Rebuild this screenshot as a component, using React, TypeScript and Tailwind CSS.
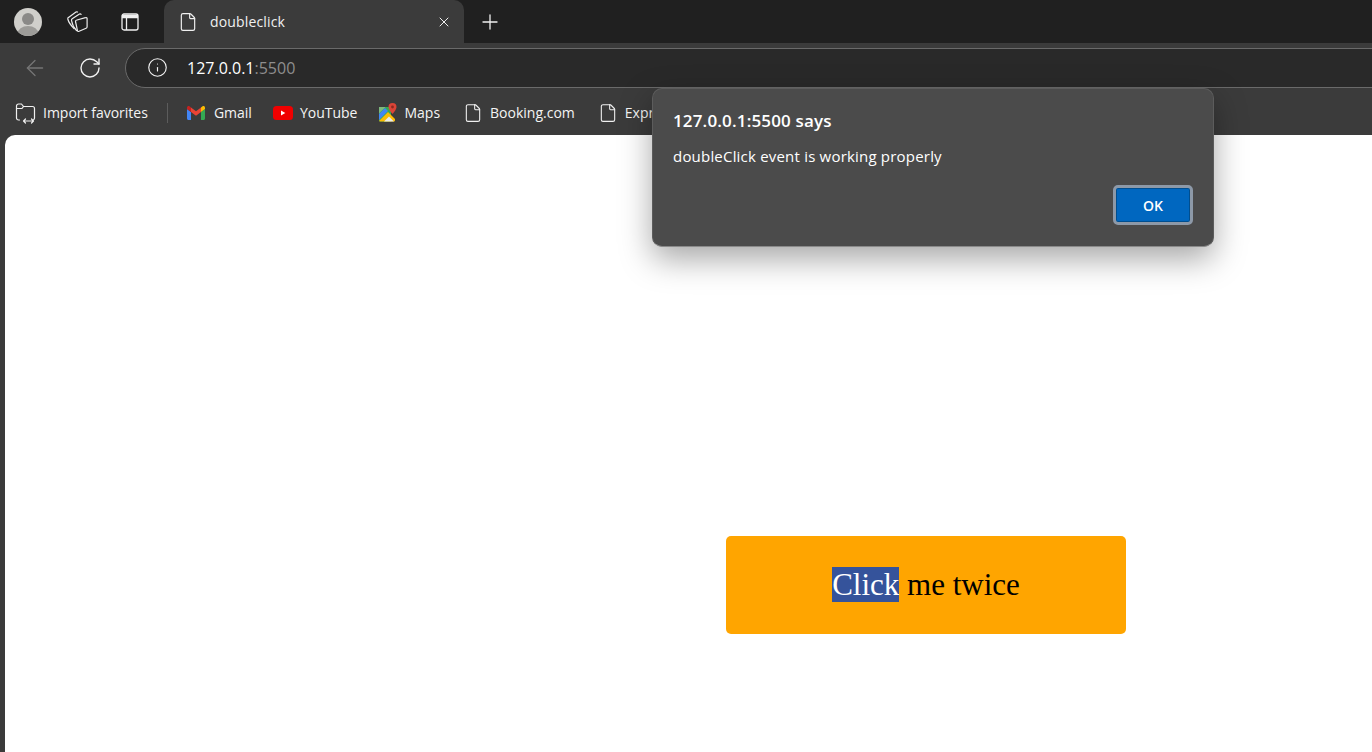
import React from 'react';
import { ArrowLeft, RotateCw, Info, X, Plus, File } from 'lucide-react';

const uiFont = "font-['Open_Sans','Noto_Sans',sans-serif]";

const ProfileIcon = () => (
  <svg width="28" height="28" viewBox="0 0 28 28">
    <defs>
      <clipPath id="avatar">
        <circle cx="14" cy="14" r="14" />
      </clipPath>
    </defs>
    <g clipPath="url(#avatar)">
      <rect width="28" height="28" fill="#d0cfcb" />
      <circle cx="14" cy="11" r="6" fill="#8a8987" />
      <ellipse cx="14" cy="26" rx="10.5" ry="8" fill="#9c9b98" />
    </g>
  </svg>
);

const CollectionsIcon = () => (
  <svg width="24" height="24" viewBox="0 0 24 24" fill="none" stroke="#ececec" strokeWidth="1.2" strokeLinejoin="round" strokeLinecap="round">
    <path d="M8 18.500C5 15.500 2.500 12 1.800 9c-.2-.8 0-1.300.7-1.600L10 2c.6-.3 1-.3 1.500 0" />
    <path d="M10.500 20.500C8 18 6 13 5.500 10.500c-.1-.8.1-1.300.7-1.700L13.500 4c.6-.3 1.200-.2 1.600.3" />
    <path d="M11 10l8.500-2.300c1-.3 1.600.1 1.600 1v8c0 .8-.3 1.300-1 1.600l-7 3c-1 .4-1.500.1-1.700-.9L9.500 11.500c-.1-.8.300-1.200 1.500-1.500z" />
  </svg>
);

const TabsIcon = () => (
  <svg width="20" height="20" viewBox="0 0 20 20" fill="none" stroke="#f0f0f0" strokeWidth="1.300">
    <rect x="2" y="2" width="16" height="16" rx="2" />
    <path d="M2 4.500h16" strokeWidth="3.500" />
    <path d="M6.500 6v12" />
  </svg>
);

const ImportIcon = () => (
  <svg width="22" height="22" viewBox="0 0 22 22" fill="none" stroke="#f0f0f0" strokeWidth="1.200" strokeLinejoin="round" strokeLinecap="round">
    <path d="M4.500 18H3.500a2 2 0 0 1-2-2V4a2 2 0 0 1 2-2h3l2 2.500h9a2 2 0 0 1 2 2v9.500a2 2 0 0 1-.8 1.600" />
    <path d="M1.500 6.500h5.500l1.500-2" />
    <path d="M8.500 19h10M10.500 17l-2 2 2 2M16.500 17l2 2-2 2" />
  </svg>
);

const GmailIcon = () => (
  <svg width="18" height="14" viewBox="0 0 18 14" className="shrink-0">
    <path d="M0 3v9.500C0 13.300.7 14 1.500 14H4V6z" fill="#4285f4" />
    <path d="M14 6v8h2.500c.8 0 1.500-.7 1.500-1.500V3z" fill="#34a853" />
    <path d="M4 6v8h0V6l5 3.800L14 6V1.500L9 5.200 4 1.500z" fill="#ea4335" />
    <path d="M14 1.500V6l4-3V1.700C18 .3 16.400-.5 15.300.4z" fill="#fbbc04" />
    <path d="M0 3l4 3V1.500L2.700.4C1.600-.5 0 .3 0 1.700z" fill="#c5221f" />
  </svg>
);

const YoutubeIcon = () => (
  <svg width="20" height="14" viewBox="0 0 20 14" className="shrink-0">
    <rect width="20" height="14" rx="3.500" fill="#f00000" />
    <path d="M8 4.500v5l4.300-2.500z" fill="#fff" />
  </svg>
);

const MapsIcon = () => (
  <svg width="18" height="19" viewBox="0 0 18 19" className="shrink-0">
    <path d="M0 4h12v14.500H1a1 1 0 0 1-1-1z" fill="#34a853" />
    <path d="M0 4h6.500L0 10.500z" fill="#7db87d" />
    <path d="M0 18l9-9 7 7v1.500a1 1 0 0 1-1 1H1z" fill="#fbbc04" />
    <path d="M5 18.500l5-5 5 5z" fill="#e8eaed" />
    <path d="M0 11l6-6 3 3-9 9z" fill="#4285f4" />
    <path d="M13.500 0a4 4 0 0 0-4 4c0 2.800 4 7 4 7s4-4.200 4-7a4 4 0 0 0-4-4z" fill="#db4437" />
    <circle cx="13.500" cy="4" r="1.400" fill="#8c2a20" />
  </svg>
);

const Bookmark = ({ icon, label, className }: { icon: React.ReactNode; label: string; className: string }) => (
  <div className={`flex items-center shrink-0 ${className}`}>
    {icon}
    <span className="text-[14px] text-[#f4f4f4] whitespace-nowrap">{label}</span>
  </div>
);

export default function App() {
  return (
    <div className={`relative w-[1372px] h-[752px] overflow-hidden bg-[#3b3b3b] ${uiFont}`}>
      {/* Tab strip */}
      <div className="h-[43px] bg-[#202020] flex items-center">
        <div className="ml-[14px] w-[28px] h-[28px]">
          <ProfileIcon />
        </div>
        <div className="ml-[24px] flex items-center">
          <CollectionsIcon />
        </div>
        <div className="ml-[30px] flex items-center">
          <TabsIcon />
        </div>
        <div className="ml-[24px] self-end h-[43px] w-[300px] bg-[#3b3b3b] rounded-t-[10px] flex items-center pl-[14px] pr-[12px]">
          <File size={20} strokeWidth={1.4} className="text-[#f0f0f0]" />
          <span className="ml-[12px] text-[14px] text-[#f0f0f0] tracking-[0.15px]">doubleclick</span>
          <X size={16} strokeWidth={1.5} className="ml-auto text-[#f0f0f0]" />
        </div>
        <Plus size={24} strokeWidth={1.3} className="ml-[14px] text-[#f0f0f0]" />
      </div>

      {/* Toolbar */}
      <div className="h-[49px] flex items-center">
        <ArrowLeft size={26} strokeWidth={1.2} className="ml-[22px] shrink-0 text-[#757575]" />
        <RotateCw size={24} strokeWidth={1.4} className="ml-[30px] shrink-0 text-[#f0f0f0]" />
        <div className="ml-[23px] w-[1300px] h-[40px] shrink-0 rounded-full border border-[#6a6a6a] bg-[#292929] flex items-center pl-[21px]">
          <Info size={21} strokeWidth={1.3} className="text-[#f4f4f4]" />
          <span className="ml-[19px] text-[16px] text-[#ffffff]">
            127.0.0.1<span className="text-[#8e8e8e]">:5500</span>
          </span>
        </div>
      </div>

      {/* Bookmarks bar */}
      <div className="h-[43px] flex items-center pb-[2px]">
        <Bookmark icon={<ImportIcon />} label="Import favorites" className="ml-[15px] gap-[6px]" />
        <div className="ml-[19px] w-px h-[20px] bg-[#5c5c5c]" />
        <Bookmark icon={<GmailIcon />} label="Gmail" className="ml-[19px] gap-[9px]" />
        <Bookmark icon={<YoutubeIcon />} label="YouTube" className="ml-[21px] gap-[7px]" />
        <Bookmark icon={<MapsIcon />} label="Maps" className="ml-[22px] gap-[7px]" />
        <Bookmark icon={<File size={20} strokeWidth={1.3} className="text-[#f0f0f0]" />} label="Booking.com" className="ml-[23px] gap-[7px]" />
        <Bookmark icon={<File size={20} strokeWidth={1.3} className="text-[#f0f0f0]" />} label="Expr" className="ml-[23px] gap-[7px]" />
      </div>

      {/* Page content */}
      <div className="ml-[5px] h-[617px] bg-white rounded-tl-[10px] pt-[401px] pl-[721px]">
        <div className="w-[400px] h-[98px] bg-[#ffa500] rounded-[5px] flex items-center justify-center font-['Liberation_Serif',serif] text-[31px] text-black">
          <span>
            <span className="bg-[#35539b] text-white">Click</span> me twice
          </span>
        </div>
      </div>

      {/* Alert dialog */}
      <div className="absolute left-[652px] top-[88px] w-[562px] h-[159px] rounded-[10px] bg-[#4b4b4b] border border-[#5c5c5c] border-b-[#8a8a8a] shadow-[0_12px_32px_rgba(0,0,0,0.35)] pl-[20px] pr-[20px] flex flex-col">
        <div className="mt-[20px] text-[17px] leading-[24px] font-semibold tracking-[0.15px] text-white">127.0.0.1:5500 says</div>
        <div className="mt-[13px] text-[15px] leading-[20px] tracking-[0.2px] text-white">doubleClick event is working properly</div>
        <div className="mt-[19px] flex justify-end">
          <div className="w-[80px] h-[40px] rounded-[5px] border-[3px] border-[#8d99a8] bg-[#0067c0] shadow-[inset_0_0_0_1px_#004e8f] flex items-center justify-center text-[14px] font-semibold text-white">
            OK
          </div>
        </div>
      </div>
    </div>
  );
}
